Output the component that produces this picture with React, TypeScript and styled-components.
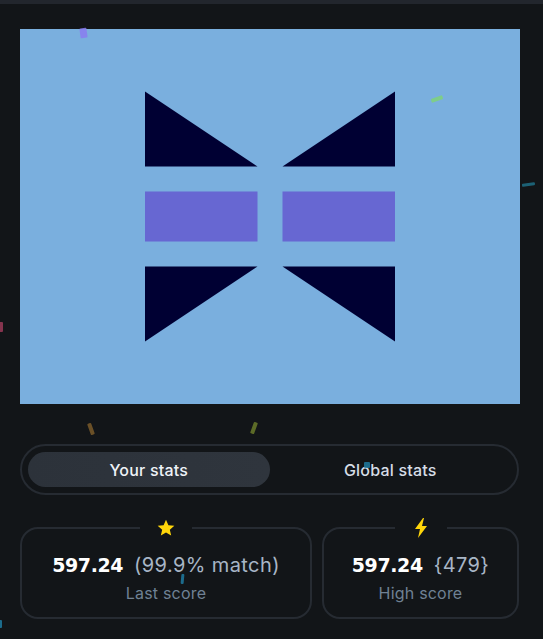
import React from "react";
import styled, { createGlobalStyle } from "styled-components";

const Global = createGlobalStyle`
  html, body { margin: 0; padding: 0; background: #121518; }
  body { font-family: Inter, "Noto Sans", sans-serif; overflow: hidden; }
  #root { width: 543px; height: 639px; }
`;

const Page = styled.div`
  position: relative;
  width: 543px;
  height: 639px;
  background: #121518;
  overflow: hidden;
`;

const TopBar = styled.div`
  height: 4px;
  background: #22262d;
`;

const Column = styled.div`
  width: 500px;
  margin-left: 20px;
  padding-top: 25px;
  display: flex;
  flex-direction: column;
`;

const Canvas = styled.svg`
  display: block;
  width: 500px;
  height: 375px;
`;

const Tabs = styled.div`
  margin-top: 40px;
  height: 51px;
  box-sizing: border-box;
  border: 2px solid #262b32;
  border-radius: 26px;
  padding: 6px;
  display: flex;
  width: 499px;
`;

const Tab = styled.div<{ $active?: boolean }>`
  flex: 1;
  display: flex;
  align-items: center;
  justify-content: center;
  border-radius: 18px;
  font-size: 16px;
  font-weight: 500;
  letter-spacing: 0.2px;
  color: ${(p) => (p.$active ? "#eef2f7" : "#d6dde6")};
  background: ${(p) => (p.$active ? "linear-gradient(90deg, #2c323a, #2f353d)" : "transparent")};
`;

const Cards = styled.div`
  margin-top: 32px;
  display: flex;
  gap: 10px;
  width: 499px;
`;

const Card = styled.div<{ $w: number }>`
  position: relative;
  width: ${(p) => p.$w}px;
  height: 92px;
  box-sizing: border-box;
  border: 2px solid #262b32;
  border-radius: 18px;
  display: flex;
  flex-direction: column;
  align-items: center;
  padding-top: 24px;
`;

const Badge = styled.div`
  position: absolute;
  top: -13px;
  left: 50%;
  transform: translateX(-50%);
  width: 52px;
  height: 24px;
  background: #121518;
  display: flex;
  align-items: center;
  justify-content: center;
`;

const ScoreLine = styled.div`
  display: flex;
  align-items: baseline;
  gap: 11px;
  line-height: 24px;
`;

const Score = styled.span`
  font-family: "DejaVu Sans", Inter, sans-serif;
  font-size: 19px;
  color: #ffffff;
  font-weight: 700;
  letter-spacing: -0.4px;
`;

const Extra = styled.span`
  font-size: 20px;
  color: #a8b6c6;
  font-weight: 400;
  letter-spacing: 0.4px;
`;

const Label = styled.div`
  margin-top: 6px;
  font-size: 16px;
  letter-spacing: 0.2px;
  color: #6f8194;
`;

const Confetti = styled.div<{ $c: string }>`
  position: absolute;
  background: ${(p) => p.$c};
  border-radius: 1px;
  opacity: 0.85;
`;

const confetti = [
  { x: 80, y: 28, w: 7, h: 10, r: -8, c: "#8a7cf0" },
  { x: 431, y: 97, w: 12, h: 4, r: -20, c: "#7fd27a" },
  { x: 522, y: 183, w: 13, h: 3, r: -8, c: "#1f6f86" },
  { x: -2, y: 322, w: 5, h: 10, r: 0, c: "#9a3a58" },
  { x: 89, y: 423, w: 4, h: 12, r: -20, c: "#7a5a2a" },
  { x: 252, y: 422, w: 4, h: 12, r: 20, c: "#6a7a2a" },
  { x: 364, y: 462, w: 6, h: 6, r: 0, c: "#1f7aa0" },
  { x: 181, y: 574, w: 3, h: 10, r: 5, c: "#1f7aa0" },
  { x: -1, y: 620, w: 3, h: 8, r: 0, c: "#1f7aa0" },
];

const Star = () => (
  <svg width="20" height="20" viewBox="0 0 24 24">
    <path
      d="M12 2.2l2.9 6.6 7.1.6-5.4 4.7 1.6 7-6.2-3.7-6.2 3.7 1.6-7L2 9.4l7.1-.6z"
      fill="#ffd60a"
    />
  </svg>
);

const Bolt = () => (
  <svg width="14" height="20" viewBox="0 0 14 20">
    <path d="M9 0L1 11h5l-2 9 9-12H8l2-8z" fill="#ffd60a" />
  </svg>
);

export default function App() {
  return (
    <Page>
      <Global />
      <TopBar />
      <Column>
        <Canvas viewBox="0 0 400 300">
          <rect width="400" height="300" fill="#7aafde" />
          <polygon points="100,50 100,110 190,110" fill="#000033" />
          <polygon points="300,50 300,110 210,110" fill="#000033" />
          <rect x="100" y="130" width="90" height="40" fill="#6767d2" />
          <rect x="210" y="130" width="90" height="40" fill="#6767d2" />
          <polygon points="100,190 190,190 100,250" fill="#000033" />
          <polygon points="210,190 300,190 300,250" fill="#000033" />
        </Canvas>
        <Tabs>
          <Tab $active>Your stats</Tab>
          <Tab>Global stats</Tab>
        </Tabs>
        <Cards>
          <Card $w={292}>
            <Badge>
              <Star />
            </Badge>
            <ScoreLine>
              <Score>597.24</Score>
              <Extra>(99.9% match)</Extra>
            </ScoreLine>
            <Label>Last score</Label>
          </Card>
          <Card $w={197}>
            <Badge>
              <Bolt />
            </Badge>
            <ScoreLine>
              <Score>597.24</Score>
              <Extra>{"{479}"}</Extra>
            </ScoreLine>
            <Label>High score</Label>
          </Card>
        </Cards>
      </Column>
      {confetti.map((p, i) => (
        <Confetti
          key={i}
          $c={p.c}
          style={{ left: p.x, top: p.y, width: p.w, height: p.h, transform: `rotate(${p.r}deg)` }}
        />
      ))}
    </Page>
  );
}
